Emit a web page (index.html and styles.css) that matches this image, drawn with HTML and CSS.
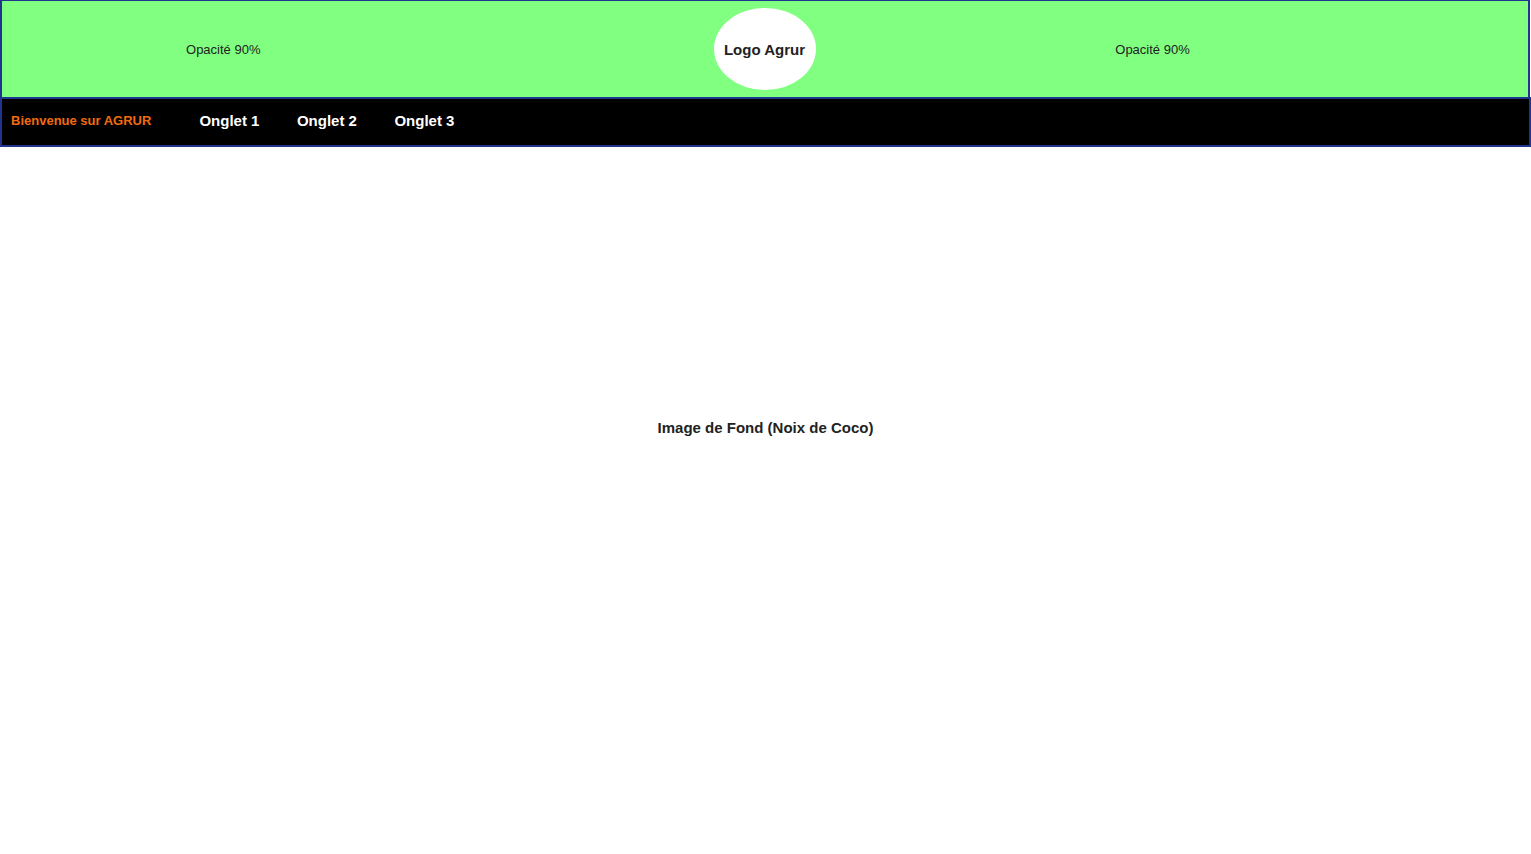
FILE: index.html
```html
<!DOCTYPE html>
<html lang="fr">
<head>
<meta charset="utf-8">
<title>AGRUR</title>
<link rel="stylesheet" href="styles.css">
</head>
<body>
<header class="top">
  <div class="col col-left"><span class="opacity">Opacité 90%</span></div>
  <div class="col col-mid"><div class="logo">Logo Agrur</div></div>
  <div class="col col-right"><span class="opacity">Opacité 90%</span></div>
</header>
<nav class="nav">
  <span class="welcome">Bienvenue sur AGRUR</span>
  <a class="tab">Onglet 1</a>
  <a class="tab">Onglet 2</a>
  <a class="tab">Onglet 3</a>
</nav>
<main class="hero">
  <p class="hero-text">Image de Fond (Noix de Coco)</p>
</main>
</body>
</html>
```

FILE: styles.css
```css
* { box-sizing: border-box; }
html, body { margin: 0; padding: 0; background: #fff; }
body { font-family: "Liberation Sans", Arial, sans-serif; color: #222; }

.top {
  width: 1530px;
  height: 98px;
  background: #80ff80;
  border: 2px solid #1f3590;
  border-top-width: 1px;
  border-bottom-width: 1px;
  display: flex;
  align-items: center;
}
.col { display: flex; justify-content: center; align-items: center; }
.col-left { width: 442.5px; }
.col-mid { width: 640px; }
.col-right { width: 136px; }
.opacity { font-size: 13px; color: #222; }
.logo {
  width: 102px;
  height: 82px;
  border-radius: 50%;
  background: #fff;
  display: flex;
  align-items: center;
  justify-content: center;
  font-weight: bold;
  font-size: 15px;
  color: #222;
}

.nav {
  height: 50px;
  margin-top: -1px;
  background: #000;
  border: 2px solid #1f3590;
  display: flex;
  align-items: center;
  padding-left: 9px;
  padding-bottom: 4px;
}
.welcome { color: #f26a10; font-weight: bold; font-size: 13px; margin-right: 48px; }
.tab { color: #fff; font-weight: bold; font-size: 15px; margin-right: 37.5px; }

.hero {
  height: 560px;
  display: flex;
  align-items: center;
  justify-content: center;
}
.hero-text { margin: 0; font-weight: bold; font-size: 15px; color: #222; }
```
